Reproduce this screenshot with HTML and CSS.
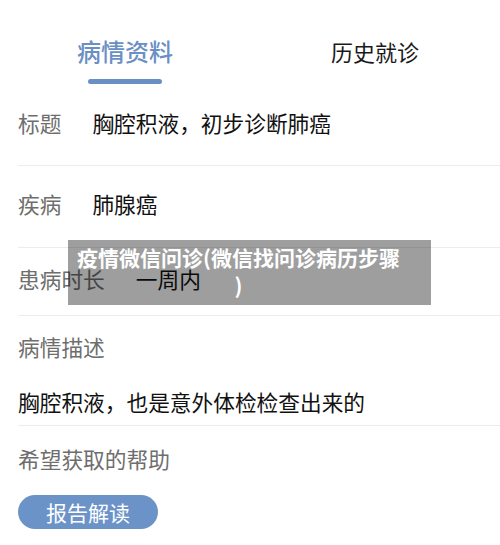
FILE: index.html
```html
<!DOCTYPE html>
<html lang="zh-CN">
<head>
<meta charset="UTF-8">
<meta name="viewport" content="width=device-width, initial-scale=1.0">
<title>病情资料</title>
<link rel="stylesheet" href="styles.css">
</head>
<body>
	<div class="tabs">
		<div class="tab active">
			<span>病情资料</span>
			<div class="tab-line"></div>
		</div>
		<div class="tab">
			<span>历史就诊</span>
		</div>
	</div>

	<div class="row row-title">
		<span class="label">标题</span>
		<span class="value">胸腔积液，初步诊断肺癌</span>
	</div>
	<div class="row row-disease">
		<span class="label">疾病</span>
		<span class="value">肺腺癌</span>
	</div>
	<div class="row row-time">
		<span class="label">患病时长</span>
		<span class="value">一周内</span>
	</div>
	<div class="block block-desc">
		<div class="label">病情描述</div>
		<div class="value desc">胸腔积液，也是意外体检检查出来的</div>
	</div>
	<div class="block block-help">
		<div class="label">希望获取的帮助</div>
		<button class="help-btn">报告解读</button>
	</div>

	<div class="banner">疫情微信问诊(微信找问诊病历步骤)</div>
</body>
</html>
```

FILE: styles.css
```css
body {
	margin: 0;
	background: #fff;
	font-family: "Noto Sans CJK SC", "Noto Sans", sans-serif;
	position: relative;
}

.tabs {
	display: grid;
	grid-template-columns: 1fr 1fr;
	height: 85px;
}

.tab {
	padding-top: 35px;
	text-align: center;
	font-size: 22px;
	line-height: 32px;
	color: #1a1a1a;
}

.tab.active {
	font-size: 24px;
	font-weight: 500;
	color: #6a8fc5;
}

.tab-line {
	width: 74px;
	height: 5px;
	margin: 12px auto 0;
	border-radius: 3px;
	background: #6a8fc5;
}

.row {
	display: flex;
	align-items: center;
	gap: 31px;
	box-sizing: border-box;
	margin-left: 18px;
	padding-bottom: 5px;
	border-bottom: 1px solid #ececec;
}

.row-title { height: 81px; }
.row-disease { height: 82px; }
.row-time { height: 68px; }

.label {
	font-size: 21.7px;
	line-height: 30px;
	color: #6e6e6e;
}

.value {
	font-size: 21.7px;
	line-height: 30px;
	color: #111;
}

.block {
	margin-left: 18px;
}

.block-desc {
	padding: 16px 0 8px;
	border-bottom: 1px solid #ececec;
}

.desc {
	margin-top: 25px;
}

.block-help {
	padding-top: 18px;
}

.help-btn {
	display: block;
	margin-top: 21px;
	width: 140px;
	height: 34px;
	padding: 0;
	border: none;
	border-radius: 17px;
	background: #6b93c8;
	color: #fff;
	font-family: inherit;
	font-size: 21px;
	line-height: 34px;
}

.banner {
	position: absolute;
	top: 240px;
	left: 68px;
	width: 363px;
	height: 65px;
	box-sizing: border-box;
	padding: 3px 29px 0 7px;
	background: rgba(0, 0, 0, 0.38);
	color: #fff;
	font-size: 21px;
	font-weight: 700;
	line-height: 28px;
	text-align: center;
	line-break: anywhere;
}
```
